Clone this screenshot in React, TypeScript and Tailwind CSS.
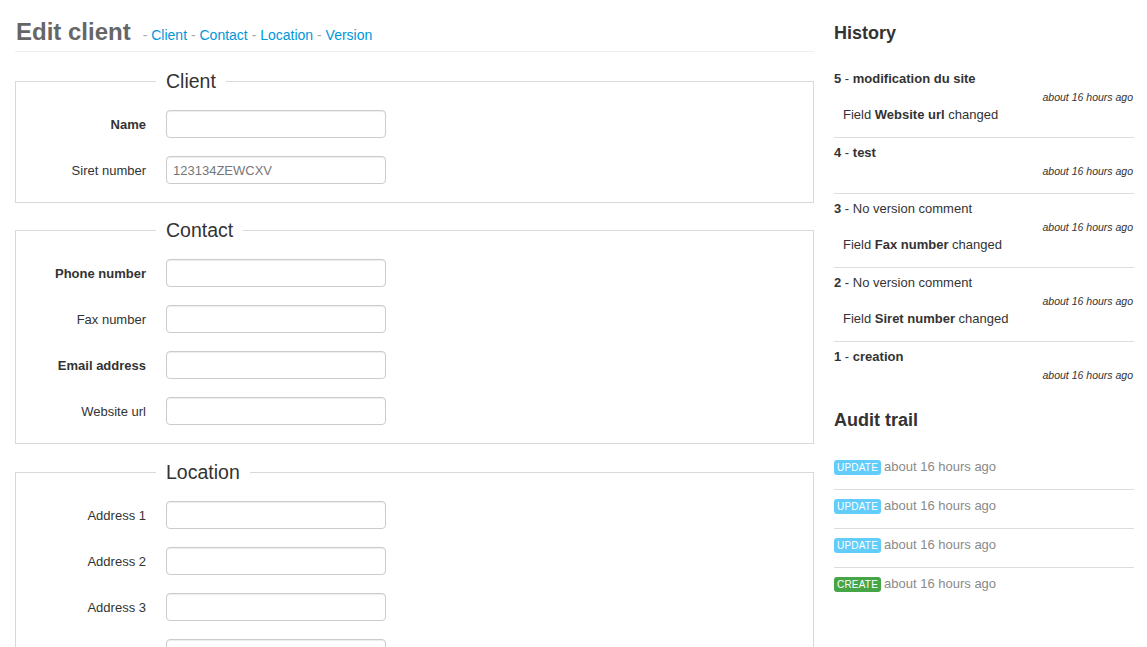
import React from "react";

const font = { fontFamily: '"Liberation Sans", Arial, Helvetica, sans-serif' };

type Field = { label: string; bold?: boolean; value?: string };

function Row({ f }: { f: Field }) {
  return (
    <div className="flex items-center h-[28px]">
      <label
        className={`w-[130px] text-right text-[13px] text-[#333] pt-px ${f.bold ? "font-bold" : ""}`}
      >
        {f.label}
      </label>
      <input
        readOnly
        value={f.value ?? ""}
        className="ml-[20px] w-[220px] h-[28px] px-[6px] text-[13px] text-[#777] bg-white border border-[#ccc] rounded-[4px] shadow-[inset_0_1px_1px_rgba(0,0,0,0.075)] outline-none"
        style={font}
      />
    </div>
  );
}

function Section({ title, fields, mb = "" }: { title: string; fields: Field[]; mb?: string }) {
  return (
    <fieldset className={`border border-[#d9d9d9] pb-[18px] ${mb}`}>
      <legend className="ml-[140px] px-[10px] text-[19.5px] leading-[30px] text-[#333]">{title}</legend>
      <div className="flex flex-col gap-[18px] pt-[14px]">
        {fields.map((f, i) => (
          <Row key={i} f={f} />
        ))}
      </div>
    </fieldset>
  );
}

type Hist = { n: number; title: string; boldTitle: boolean; field?: string };

const history: Hist[] = [
  { n: 5, title: "modification du site", boldTitle: true, field: "Website url" },
  { n: 4, title: "test", boldTitle: true },
  { n: 3, title: "No version comment", boldTitle: false, field: "Fax number" },
  { n: 2, title: "No version comment", boldTitle: false, field: "Siret number" },
  { n: 1, title: "creation", boldTitle: true },
];

const audits = [
  { kind: "UPDATE", color: "bg-[#62cdfa]" },
  { kind: "UPDATE", color: "bg-[#62cdfa]" },
  { kind: "UPDATE", color: "bg-[#62cdfa]" },
  { kind: "CREATE", color: "bg-[#46a546]" },
];

export default function App() {
  return (
    <div className="bg-white w-[1147px] h-[647px] overflow-hidden text-[#333]" style={font}>
      <div className="flex pl-[15px] gap-[20px]">
        {/* Left column */}
        <div className="w-[799px] shrink-0">
          <div className="pt-[14px] pb-px border-b border-[#eee] mb-[14px] flex items-baseline">
            <h1 className="ml-px text-[24px] leading-[36px] font-bold text-[#666]">Edit client</h1>
            <div className="ml-[12px] text-[14px] text-[#0096d9]">
              {["Client", "Contact", "Location", "Version"].map((l, i) => (
                <span key={l}>
                  {i > 0 ? " " : ""}
                  <span className="text-[#aaa]">-</span>{" "}
                  <a href="#" className="text-[#0096d9]">
                    {l}
                  </a>
                </span>
              ))}
            </div>
          </div>

          <Section
            title="Client"
            mb="mb-[12px]"
            fields={[
              { label: "Name", bold: true },
              { label: "Siret number", value: "123134ZEWCXV" },
            ]}
          />
          <Section
            title="Contact"
            mb="mb-[13px]"
            fields={[
              { label: "Phone number", bold: true },
              { label: "Fax number" },
              { label: "Email address", bold: true },
              { label: "Website url" },
            ]}
          />
          <Section
            title="Location"
            fields={[
              { label: "Address 1" },
              { label: "Address 2" },
              { label: "Address 3" },
              { label: "" },
            ]}
          />
        </div>

        {/* Right column */}
        <div className="w-[300px] shrink-0 pt-[23px]">
          <h2 className="text-[18px] leading-[20px] font-bold text-[#333] mb-[21px]">History</h2>
          <div>
            {history.map((h, i) => (
              <div
                key={h.n}
                className={`pt-[6px] pb-[13px] ${i < history.length - 1 ? "border-b border-[#ddd]" : ""}`}
              >
                <div className="text-[13px] leading-[18px] text-[#333]">
                  <span className="font-bold">{h.n}</span> -{" "}
                  <span className={h.boldTitle ? "font-bold" : ""}>{h.title}</span>
                </div>
                <div className="text-right text-[10.5px] leading-[18px] italic pr-px">about 16 hours ago</div>
                {h.field && (
                  <div className="pl-[9px] text-[13px] leading-[18px]">
                    Field <span className="font-bold">{h.field}</span> changed
                  </div>
                )}
              </div>
            ))}
          </div>

          <h2 className="mt-[13px] text-[18px] leading-[20px] font-bold text-[#333] mb-[21px]">Audit trail</h2>
          <div>
            {audits.map((a, i) => (
              <div
                key={i}
                className={`pt-[7px] pb-[13px] flex items-center ${i < audits.length - 1 ? "border-b border-[#ddd]" : ""}`}
              >
                <span
                  className={`${a.color} text-white text-[10px] leading-[15px] h-[15px] px-[3px] rounded-[3px] tracking-[0.2px]`}
                >
                  {a.kind}
                </span>
                <span className="ml-[3px] text-[13px] leading-[18px] text-[#8a8a8a]">about 16 hours ago</span>
              </div>
            ))}
          </div>
        </div>
      </div>
    </div>
  );
}
